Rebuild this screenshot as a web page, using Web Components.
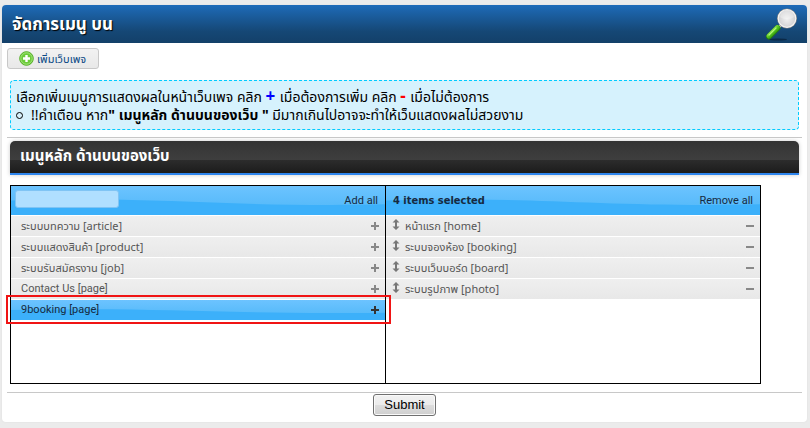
<!DOCTYPE html>
<html lang="th">
<head>
<meta charset="utf-8">
<title>จัดการเมนู บน</title>
<style>
  body {
    margin: 0;
    padding: 5px 3px 6px 2px;
    background: #ebebeb;
    color: #000;
    font-family: "Noto Sans", "Noto Sans Thai", "Liberation Sans", sans-serif;
    font-size: 14px;
  }
</style>
</head>
<body>
<admin-panel heading="จัดการเมนู บน">
  <add-page-button slot="tools">เพิ่มเว็บเพจ</add-page-button>
  <notice-box>
    <span>เลือกเพิ่มเมนูการแสดงผลในหน้าเว็บเพจ คลิก <sign-mark kind="plus">+</sign-mark> เมื่อต้องการเพิ่ม คลิก <sign-mark kind="minus">-</sign-mark> เมื่อไม่ต้องการ</span>
    <span slot="item">!!คำเตือน หาก<b>" เมนูหลัก ด้านบนของเว็บ "</b> มีมากเกินไปอาจจะทำให้เว็บแสดงผลไม่สวยงาม</span>
  </notice-box>
  <menu-section slot="section" heading="เมนูหลัก ด้านบนของเว็บ">
    <menu-picker>
      <pick-item slot="available">ระบบบทความ [article]</pick-item>
      <pick-item slot="available">ระบบแสดงสินค้า [product]</pick-item>
      <pick-item slot="available">ระบบรับสมัครงาน [job]</pick-item>
      <pick-item slot="available" lang="en">Contact Us [page]</pick-item>
      <pick-item slot="available" lang="en" active>9booking [page]</pick-item>
      <pick-item slot="selected" selected>หน้าแรก [home]</pick-item>
      <pick-item slot="selected" selected>ระบบจองห้อง [booking]</pick-item>
      <pick-item slot="selected" selected>ระบบเว็บบอร์ด [board]</pick-item>
      <pick-item slot="selected" selected>ระบบรูปภาพ [photo]</pick-item>
    </menu-picker>
  </menu-section>
  <submit-button slot="footer">Submit</submit-button>
</admin-panel>

<script>
// glossy blue strip shared by the picker headers and the active row
const GLOSS = `url("data:image/svg+xml,%3Csvg xmlns='http://www.w3.org/2000/svg' width='375' height='30' viewBox='0 0 100 30' preserveAspectRatio='none'%3E%3Cdefs%3E%3ClinearGradient id='a' x2='0' y2='1'%3E%3Cstop stop-color='%236cc3ff'/%3E%3Cstop offset='1' stop-color='%2358bbfa'/%3E%3C/linearGradient%3E%3C/defs%3E%3Cpath fill='%233cb0fa' d='M0 0h100v30H0z'/%3E%3Cpath fill='url(%23a)' d='M0 0h100v19C68 22 45 14 22 14Q8 14 0 15z'/%3E%3C/svg%3E") 0 0 / 100% 100% no-repeat`;

// ---------- page card ----------
class AdminPanel extends HTMLElement {
  constructor() {
    super();
    this.attachShadow({ mode: 'open' }).innerHTML = `
      <style>
        :host {
          display: block;
          background: #fff;
          border-radius: 4px;
          box-shadow: 0 0 2px #ddd;
        }
        header {
          display: flex;
          align-items: center;
          justify-content: space-between;
          height: 38px;
          padding: 0 8px 0 10px;
          border-radius: 4px 4px 0 0;
          background: linear-gradient(#1e6bb8, #154775 70%, #134069);
        }
        h1 {
          margin: 0;
          font-size: 17px;
          line-height: 24px;
          color: #fff;
          text-shadow: 1px 1px 1px #000;
        }
        .tools { padding: 5px 5px 11px; }
        .notice { padding: 0 8px; }
        hr {
          margin: 0 5px;
          border: 0;
          border-top: 1px solid #c8c8c8;
        }
        .notice + hr { margin-top: 7px; margin-bottom: 3px; }
        .section { padding: 0 8px 8px; }
        footer {
          display: flex;
          justify-content: center;
          padding: 1px 0 6px;
        }
      </style>
      <header>
        <h1></h1>
        <svg width="34" height="34" viewBox="0 0 34 34" aria-hidden="true">
          <defs>
            <radialGradient id="lens" cx=".5" cy=".55" r=".6">
              <stop offset="0" stop-color="#f0f0f0"/><stop offset="1" stop-color="#cacacc"/>
            </radialGradient>
            <linearGradient id="grip" x2="1" y2="1">
              <stop offset=".2" stop-color="#a5ee60"/><stop offset=".5" stop-color="#55c720"/><stop offset=".8" stop-color="#2c8c0c"/>
            </linearGradient>
          </defs>
          <ellipse cx="13" cy="32.500" rx="9" ry="1" fill="#0b2947"/>
          <path d="M13 21l5-5" stroke="#c4c6c8" stroke-width="3"/>
          <path d="M4 29.500l8.500-8.500" stroke="#267c0c" stroke-width="6" stroke-linecap="round"/>
          <path d="M4 29l8.500-8.500" stroke="url(#grip)" stroke-width="4.800" stroke-linecap="round"/>
          <path d="M4 28l7-7" stroke="#b5f57a" stroke-width="1.200" stroke-linecap="round"/>
          <circle cx="22" cy="11.500" r="10" fill="#8b8784"/>
          <circle cx="22" cy="11.500" r="8.800" fill="url(#lens)" stroke="#f4f4f4" stroke-width="1.200"/>
          <path d="M15 10a7 7 0 0 1 14 0c-4 3-10 3-14 0z" fill="#fff" opacity=".3"/>
        </svg>
      </header>
      <div class="tools"><slot name="tools"></slot></div>
      <div class="notice"><slot></slot></div>
      <hr>
      <div class="section"><slot name="section"></slot></div>
      <hr>
      <footer><slot name="footer"></slot></footer>
    `;
    this.shadowRoot.querySelector('h1').textContent = this.getAttribute('heading');
  }
}

class AddPageButton extends HTMLElement {
  constructor() {
    super();
    this.attachShadow({ mode: 'open' }).innerHTML = `
      <style>
        :host { display: flex; }
        button {
          display: flex;
          align-items: center;
          gap: 3px;
          height: 21px;
          padding: 0 12px 0 11px;
          border: 1px solid #c8c8c8;
          border-radius: 3px;
          background: linear-gradient(#f2f2f2, #e8e8e8);
          color: #0b4a85;
          font: inherit;
          font-size: 11px;
          line-height: 18px;
          white-space: nowrap;
        }
        svg { flex: none; }
      </style>
      <button type="button">
        <svg width="15" height="15" viewBox="0 0 15 15" aria-hidden="true">
          <circle cx="7.500" cy="7.500" r="6.800" fill="#6ccb3a" stroke="#55ad28"/>
          <circle cx="7.500" cy="7.500" r="5.700" fill="none" stroke="#a2e57a"/>
          <path d="M7.500 4v7M4 7.500h7" stroke="#fff" stroke-width="2.400"/>
        </svg>
        <span><slot></slot></span>
      </button>
    `;
  }
}

// ---------- dashed hint box ----------
class NoticeBox extends HTMLElement {
  constructor() {
    super();
    this.attachShadow({ mode: 'open' }).innerHTML = `
      <style>
        :host {
          display: block;
          padding: 7px 5px 5px;
          border: 1px dashed #00ccff;
          border-radius: 4px;
          background: #d6f2fd;
          line-height: 18px;
        }
        p, ul { margin: 0; padding: 0; }
        ul { list-style: none; }
        li {
          display: flex;
          align-items: center;
          gap: 8px;
        }
        li::before {
          content: "";
          width: 5px;
          height: 5px;
          border: 1px solid #000;
          border-radius: 50%;
        }
      </style>
      <p><slot></slot></p>
      <ul><li><slot name="item"></slot></li></ul>
    `;
  }
}

class SignMark extends HTMLElement {
  constructor() {
    super();
    this.attachShadow({ mode: 'open' }).innerHTML = `
      <style>
        :host { font-size: 17px; font-weight: bold; line-height: 14px; }
        :host([kind="plus"]) { color: #00f; }
        :host([kind="minus"]) { color: #f00; }
      </style>
      <slot></slot>
    `;
  }
}

class MenuSection extends HTMLElement {
  constructor() {
    super();
    this.attachShadow({ mode: 'open' }).innerHTML = `
      <style>
        :host { display: block; }
        h2 {
          margin: 0 0 10px;
          padding: 4px 10px 8px;
          border-bottom: 2px solid #2f86ee;
          border-radius: 5px 5px 0 0;
          background: linear-gradient(#343434, #3e3e3e 58%, #2c2c2c 60%, #1c1c1c);
          box-shadow: 0 0 4px #ccc;
          color: #fff;
          font-size: 15px;
          line-height: 20px;
        }
      </style>
      <h2></h2>
      <slot></slot>
    `;
    this.shadowRoot.querySelector('h2').textContent = this.getAttribute('heading');
  }
}

// ---------- two column picker ----------
class MenuPicker extends HTMLElement {
  constructor() {
    super();
    this.attachShadow({ mode: 'open' }).innerHTML = `
      <style>
        :host {
          display: grid;
          grid-template-columns: 374fr 375fr;
          max-width: 749px;
          min-height: 197px;
          border: 1px solid #000;
          font-size: 11px;
        }
        section + section { border-left: 1px solid #000; }
        .bar {
          display: flex;
          align-items: center;
          justify-content: space-between;
          height: 29px;
          padding: 0 7px 0 4px;
          background: ${GLOSS};
          font-family: Roboto, "Noto Sans", sans-serif;
        }
        section + section .bar { padding-left: 7px; }
        input {
          box-sizing: border-box;
          width: 104px;
          height: 18px;
          margin-bottom: 3px;
          padding: 0 4px;
          border: 1px solid #80c4f4;
          border-radius: 3px;
          background: #b0dfff;
          font: inherit;
        }
        a { color: #162a40; text-decoration: none; }
        b {
          color: #162a40;
          font-family: "DejaVu Sans Condensed", "DejaVu Sans", sans-serif;
        }
      </style>
      <section>
        <div class="bar">
          <input type="text" aria-label="ค้นหา">
          <a href="#">Add all</a>
        </div>
        <slot name="available"></slot>
      </section>
      <section>
        <div class="bar">
          <b>4 items selected</b>
          <a href="#">Remove all</a>
        </div>
        <slot name="selected"></slot>
      </section>
    `;
  }
}

class PickItem extends HTMLElement {
  constructor() {
    super();
    this.attachShadow({ mode: 'open' }).innerHTML = `
      <style>
        :host {
          display: flex;
          align-items: center;
          height: 20px;
          padding: 0 5px 0 10px;
          border-top: 1px solid #fff;
          background: linear-gradient(#efefef, #e8e8e8);
          color: #555;
          line-height: 18px;
        }
        :host([lang="en"]) { font-family: Roboto, "Noto Sans", sans-serif; }
        :host([selected]) { padding-left: 6px; }
        :host([active]) {
          position: relative;
          background: ${GLOSS};
          color: #162a40;
        }
        /* red frame laid over the active row */
        :host([active])::after {
          content: "";
          position: absolute;
          inset: -5px -6px -4px -5px;
          border: 2px solid #f01414;
          pointer-events: none;
        }
        .grip { display: none; margin: 0 5px 3px 0; }
        :host([selected]) .grip { display: block; }
        .label { flex: 1; white-space: nowrap; }
        button {
          display: flex;
          padding: 1px;
          border: 0;
          background: none;
          color: #888;
        }
        :host([active]) button { color: #333; }
        :host([selected]) .v { display: none; }
      </style>
      <svg class="grip" width="8" height="11" viewBox="0 0 8 11" fill="#777" aria-hidden="true">
        <path d="M4 0l3.500 3.500H5v4h2.500L4 11 .5 7.500H3v-4H.5z"/>
      </svg>
      <span class="label"><slot></slot></span>
      <button type="button">
        <svg width="8" height="8" viewBox="0 0 8 8" fill="currentColor" aria-hidden="true">
          <path d="M0 3h8v2H0z"/><path class="v" d="M3 0h2v8H3z"/>
        </svg>
      </button>
    `;
    this.shadowRoot.querySelector('button')
      .setAttribute('aria-label', this.hasAttribute('selected') ? 'Remove' : 'Add');
  }
}

class SubmitButton extends HTMLElement {
  constructor() {
    super();
    this.attachShadow({ mode: 'open' }).innerHTML = `
      <style>
        :host { display: block; }
        button {
          height: 22px;
          padding: 0 10px;
          border: 1px solid #707070;
          border-radius: 3px;
          background: linear-gradient(#f2f2f2, #ebebeb 50%, #dddddd 50%, #cfcfcf);
          box-shadow: inset 0 0 0 1px #fafafa;
          color: #000;
          font: 13px/18px "Liberation Sans", Arial, sans-serif;
        }
      </style>
      <button type="submit"><slot></slot></button>
    `;
  }
}

customElements.define('admin-panel', AdminPanel);
customElements.define('add-page-button', AddPageButton);
customElements.define('notice-box', NoticeBox);
customElements.define('sign-mark', SignMark);
customElements.define('menu-section', MenuSection);
customElements.define('menu-picker', MenuPicker);
customElements.define('pick-item', PickItem);
customElements.define('submit-button', SubmitButton);
</script>
</body>
</html>
